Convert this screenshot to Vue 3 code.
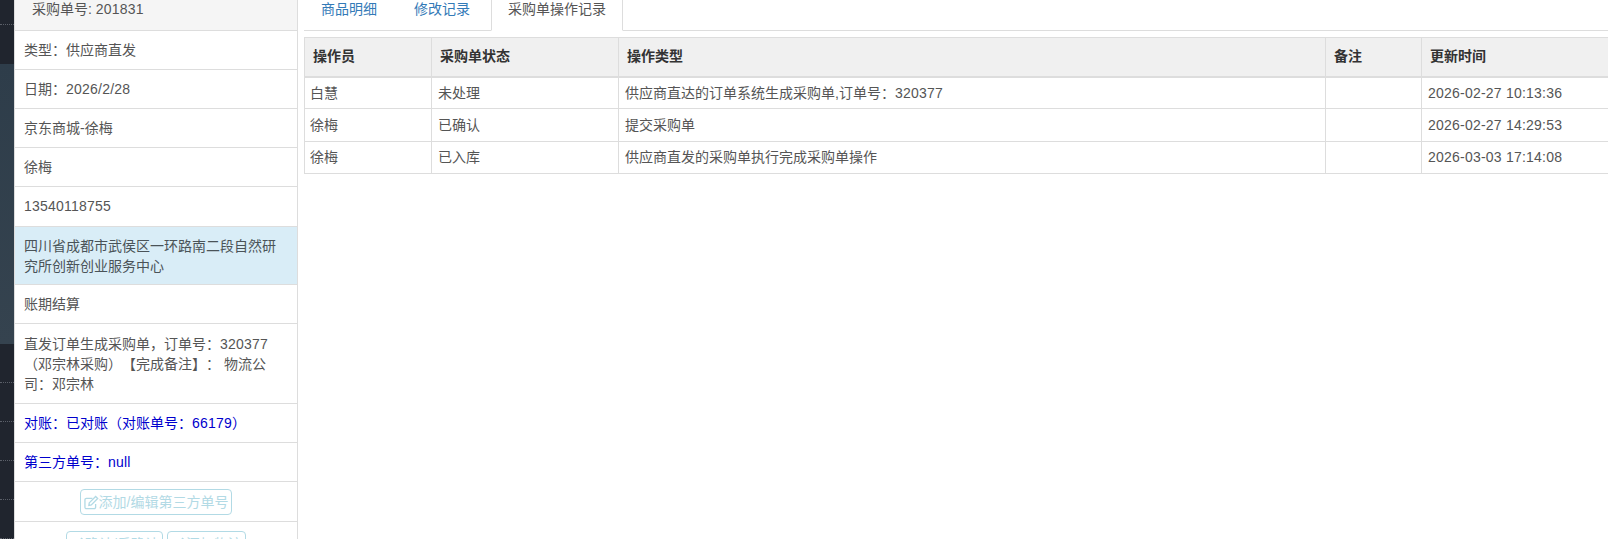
<script setup>
const navItems = [
  { cls: 'short' },
  { cls: 'gap' },
  { cls: 'light' },
  { cls: 'item' },
  { cls: 'item' },
  { cls: 'item' },
  { cls: 'item' },
  { cls: 'item' }
]
const tabs = [
  { label: '商品明细', active: false },
  { label: '修改记录', active: false },
  { label: '采购单操作记录', active: true }
]
const rows = [
  { h: 31, who: '白慧', status: '未处理', type: '供应商直达的订单系统生成采购单,订单号：', no: '320377', note: '', time: '2026-02-27 10:13:36' },
  { h: 33, who: '徐梅', status: '已确认', type: '提交采购单', no: '', note: '', time: '2026-02-27 14:29:53' },
  { h: 32, who: '徐梅', status: '已入库', type: '供应商直发的采购单执行完成采购单操作', no: '', note: '', time: '2026-03-03 17:14:08' }
]
const info = [
  { t: '类型：供应商直发', n: '', c: '' },
  { t: '日期：', n: '2026/2/28', c: '' },
  { t: '京东商城-徐梅', n: '', c: '' },
  { t: '徐梅', n: '', c: '' },
  { t: '', n: '13540118755', c: 'tall' }
]
</script>

<template>
  <div class="page">
    <aside class="nav">
      <div v-for="(n, i) in navItems" :key="i" :class="n.cls"></div>
    </aside>

    <section class="list">
      <div class="head">采购单号: <span class="num">201831</span></div>
      <div v-for="r in info" :key="r.t + r.n" class="row" :class="r.c">{{ r.t }}<span class="num">{{ r.n }}</span></div>
      <div class="row info">四川省成都市武侯区一环路南二段自然研究所创新创业服务中心</div>
      <div class="row">账期结算</div>
      <div class="row note">直发订单生成采购单，订单号：<span class="num">320377</span>（邓宗林采购）【完成备注】： 物流公司：邓宗林</div>
      <div class="row blue">对账：已对账（对账单号：<span class="num">66179</span>）</div>
      <div class="row blue">第三方单号：<span class="num">null</span></div>
      <div class="row actions one">
        <button class="btn" type="button" disabled>
          <svg class="ico" viewBox="0 0 16 16" fill="none" stroke="currentColor" stroke-width="1.4">
            <path d="M12.4 9.5V13a1.6 1.6 0 0 1-1.6 1.6H2.6A1.6 1.6 0 0 1 1 13V5.2a1.6 1.6 0 0 1 1.6-1.6H9" />
            <path d="M5.6 8.4 12.4 1.6l2.2 2.2-6.8 6.8-2.6.5z" />
          </svg>添加/编辑第三方单号
        </button>
      </div>
      <div class="row actions two">
        <button class="btn" type="button" disabled>
          <svg class="ico" viewBox="0 0 16 16" fill="none" stroke="currentColor" stroke-width="1.4">
            <path d="M12.4 9.5V13a1.6 1.6 0 0 1-1.6 1.6H2.6A1.6 1.6 0 0 1 1 13V5.2a1.6 1.6 0 0 1 1.6-1.6H9" />
            <path d="M5.6 8.4 12.4 1.6l2.2 2.2-6.8 6.8-2.6.5z" />
          </svg>确认/反确认
        </button>
        <button class="btn" type="button" disabled>
          <svg class="ico" viewBox="0 0 16 16" fill="none" stroke="currentColor" stroke-width="1.4">
            <path d="M12.4 9.5V13a1.6 1.6 0 0 1-1.6 1.6H2.6A1.6 1.6 0 0 1 1 13V5.2a1.6 1.6 0 0 1 1.6-1.6H9" />
            <path d="M5.6 8.4 12.4 1.6l2.2 2.2-6.8 6.8-2.6.5z" />
          </svg>添加物流
        </button>
      </div>
    </section>

    <main class="main">
      <ul class="tabs">
        <li v-for="t in tabs" :key="t.label" class="tab" :class="{ active: t.active }">{{ t.label }}</li>
      </ul>
      <table class="grid">
        <colgroup>
          <col class="c1" /><col class="c2" /><col class="c3" /><col class="c4" /><col class="c5" />
        </colgroup>
        <thead>
          <tr>
            <th>操作员</th>
            <th>采购单状态</th>
            <th>操作类型</th>
            <th>备注</th>
            <th>更新时间</th>
          </tr>
        </thead>
        <tbody>
          <tr v-for="r in rows" :key="r.time" :style="{ height: r.h + 'px' }">
            <td>{{ r.who }}</td>
            <td>{{ r.status }}</td>
            <td>{{ r.type }}<span class="num">{{ r.no }}</span></td>
            <td>{{ r.note }}</td>
            <td class="num">{{ r.time }}</td>
          </tr>
        </tbody>
      </table>
    </main>
  </div>
</template>

<style>
html, body { margin: 0; overflow: hidden; background: #fff; }
</style>

<style scoped>
.page {
  display: flex;
  width: 1608px;
  height: 539px;
  overflow: hidden;
  background: #fff;
  font-family: "Liberation Sans", "Noto Sans CJK SC", sans-serif;
  font-size: 14px;
  line-height: 20px;
  color: #555;
  text-spacing-trim: space-all;
}
.num { letter-spacing: 0.22px; }
.nav {
  flex: 0 0 14px;
  display: flex;
  flex-direction: column;
  background: #20252e;
}
.nav .short { height: 24px; flex: none; border-bottom: 1px dotted #5a5f68; }
.nav .gap { height: 39px; flex: none; }
.nav .light { height: 280px; flex: none; background: linear-gradient(#2e3d4a, #35434f); }
.nav .item { height: 38px; flex: none; border-bottom: 1px dotted #5a5f68; }

.list {
  flex: 0 0 284px;
  box-sizing: border-box;
  height: 539px;
  overflow: hidden;
  border-left: 1px solid #ddd;
  border-right: 1px solid #ddd;
}
.head {
  box-sizing: border-box;
  height: 31px;
  padding: 0 0 0 17px;
  line-height: 19px;
  background: #f5f5f5;
  border-bottom: 1px solid #ddd;
}
.row {
  padding: 9px 9px;
  border-bottom: 1px solid #ddd;
  background: #fff;
}
.row.tall { padding-bottom: 10px; }
.row.note { padding-top: 10px; }
.row.info { padding-bottom: 8px; background: #d9edf7; color: #4a5358; }
.row.blue { color: #0000cd; }
.actions { display: flex; justify-content: center; gap: 4px; }
.actions.one { padding: 7px 0 6px; }
.actions.two { padding: 9px 0 0; }
.btn {
  display: inline-flex;
  align-items: center;
  height: 26px;
  padding: 0 3px;
  font: inherit;
  color: #b2dae5;
  background: #fff;
  border: 1px solid #b2dae5;
  border-radius: 4px;
}
.ico { width: 15px; height: 15px; flex: none; }

.main { flex: 1 1 auto; min-width: 0; margin-left: 6px; overflow: hidden; }
.tabs {
  display: flex;
  box-sizing: border-box;
  height: 31px;
  margin: 0;
  padding: 0 0 0 1px;
  list-style: none;
  border-bottom: 1px solid #ddd;
}
.tab {
  height: 31px;
  box-sizing: border-box;
  padding: 0 15px;
  margin-right: 5px;
  border: 1px solid transparent;
  border-top: 0;
  line-height: 19px;
  color: #337ab7;
}
.tab.active {
  padding: 0 16px;
  color: #555;
  background: #fff;
  border-color: #ddd;
  border-bottom-color: #fff;
}
.grid {
  width: 1400px;
  margin-top: 6px;
  table-layout: fixed;
  border-collapse: collapse;
  border-top: 1px solid #ddd;
  border-left: 1px solid #ddd;
}
.c1 { width: 127px; }
.c2 { width: 187px; }
.c3 { width: 707px; }
.c4 { width: 96px; }
th {
  height: 36px;
  padding: 0 8px 2px;
  text-align: left;
  font-weight: 700;
  color: #333;
  background: #f0f0f0;
  border-right: 1px solid #ddd;
  border-bottom: 2px solid #ddd;
}
td {
  padding: 0 6px;
  border-right: 1px solid #ddd;
  border-bottom: 1px solid #ddd;
  color: #555;
}
td:first-child { padding-left: 5px; }
</style>
